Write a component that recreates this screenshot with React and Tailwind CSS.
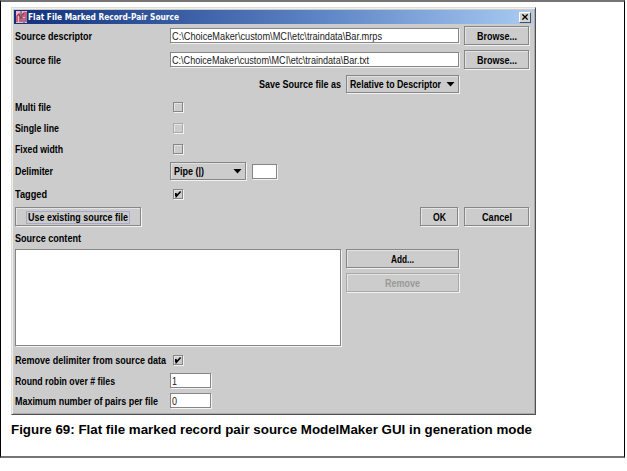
import { useLayoutEffect, useRef, useState } from 'react'

// Squeezes or stretches one line of text to a given width.
function Fit({ w, className = '', children }) {
  const ref = useRef(null)
  const [scale, setScale] = useState(1)
  useLayoutEffect(() => {
    if (ref.current.offsetWidth) setScale(w / ref.current.getBoundingClientRect().width)
  }, [])
  return (
    <span className={`inline-flex shrink-0 whitespace-pre ${className}`} style={{ width: w }}>
      <span ref={ref} className="inline-block shrink-0 origin-left" style={{ transform: `scaleX(${scale})` }}>
        {children}
      </span>
    </span>
  )
}

function Row({ h, label, w, low, children }) {
  return (
    <div className={`flex shrink-0 items-center ${h}`}>
      <div className={`flex w-[155px] shrink-0 ${low ? 'pt-[2px]' : ''}`}>
        <Fit w={w}>{label}</Fit>
      </div>
      {children}
    </div>
  )
}

function Button({ className, w, disabled, focus, children }) {
  return (
    <div
      className={`flex h-[19px] shrink-0 items-center justify-center border pt-px shadow-[1px_1px_0_#f2f2f2,inset_1px_1px_0_#e4e4e4] ${disabled ? 'border-[#a8a8a8] text-[#999]' : 'border-[#868686]'} ${className}`}
    >
      <div className={focus ? 'flex h-[13px] items-center border border-[#a9a9c6] px-px' : 'flex'}>
        <Fit w={w}>{children}</Fit>
      </div>
    </div>
  )
}

function Field({ className, w, children }) {
  return (
    <div
      className={`flex h-[15px] shrink-0 items-center border border-[#868686] bg-white pl-px pt-px text-[11.5px] font-normal text-[#222] shadow-[1px_1px_0_#f2f2f2] ${className}`}
    >
      {children && <Fit w={w}>{children}</Fit>}
    </div>
  )
}

function Combo({ className, w, children }) {
  return (
    <div
      className={`flex h-[18px] shrink-0 items-center justify-between border border-[#868686] pl-[3px] pr-[3px] shadow-[1px_1px_0_#f2f2f2,inset_1px_1px_0_#e0e0e0] ${className}`}
    >
      <Fit w={w}>{children}</Fit>
      <svg width="9" height="5" viewBox="0 0 9 5">
        <path d="M0.5 0H8.5L4.5 4.5Z" fill="#000" />
      </svg>
    </div>
  )
}

function Check({ checked, disabled }) {
  return (
    <div
      className={`ml-[3px] flex size-[10px] shrink-0 items-center justify-center border shadow-[1px_1px_0_#f2f2f2,inset_1px_1px_0_#e4e4e4] ${disabled ? 'border-[#aaa]' : 'border-[#868686]'}`}
    >
      {checked && (
        <svg width="8" height="8" viewBox="0 0 8 8">
          <path d="M1.7 3V6.3M2.4 3.4V6.3L6.6 1.6" fill="none" stroke="#000" strokeWidth="1.5" />
        </svg>
      )}
    </div>
  )
}

export default function App() {
  return (
    <div className="h-[471px] w-[627px] overflow-hidden bg-white font-['Liberation_Sans',Arial,sans-serif] text-black">
      <div className="h-[458px] w-[625px] border-x border-y-2 border-x-black border-y-[#747474] pl-[10px] pt-[5px]">
        <div className="flex h-[408px] w-[525px] flex-col border border-b-[#505050] border-l-[#deddd6] border-r-[#505050] border-t-[#deddd6] bg-[#ccc] shadow-[inset_1px_1px_0_#f0f0ea,inset_-1px_-1px_0_#aaa]">
          <div className="mx-[2px] mt-[2px] flex h-[14px] shrink-0 items-center bg-linear-to-r from-[#12307c] via-[#5f86c6] via-60% to-[#a9cbf2] pl-[2px] pr-[2px]">
            <svg width="11" height="12" viewBox="0 0 11 12" className="mr-px shrink-0">
              <rect width="11" height="12" fill="#e9b9c6" />
              <path d="M1 11V5L3 3L4 6V11M6 11V4L8 2V6M10 1V11" fill="none" stroke="#b03050" strokeWidth="1.3" />
              <path d="M5 0V8M8 7V12" stroke="#35406f" strokeWidth="1" />
            </svg>
            <Fit w={151} className="font-['DejaVu_Sans',sans-serif] text-[9px] leading-[13px] font-bold text-white">
              Flat File Marked Record-Pair Source
            </Fit>
            <div className="ml-auto flex h-[11px] w-[12px] items-center justify-center border border-b-[#505050] border-l-white border-r-[#505050] border-t-white bg-[#d6d3ce]">
              <svg width="6" height="6" viewBox="0 0 7 7">
                <path d="M0.5 0.5L6.5 6.5M6.5 0.5L0.5 6.5" stroke="#000" strokeWidth="1.5" />
              </svg>
            </div>
          </div>

          <div className="flex flex-col pl-[3px] text-[11px] leading-[13px] font-bold">
            <Row h="h-[23px]" label="Source descriptor" w={77} low>
              <Field className="w-[289px]" w={210}>{'C:\\ChoiceMaker\\custom\\MCI\\etc\\traindata\\Bar.mrps'}</Field>
              <Button className="ml-[5px] w-[65px]" w={40}>Browse...</Button>
            </Row>
            <Row h="h-[25px]" label="Source file" w={46} low>
              <Field className="w-[289px]" w={197}>{'C:\\ChoiceMaker\\custom\\MCI\\etc\\traindata\\Bar.txt'}</Field>
              <Button className="ml-[5px] w-[65px]" w={40}>Browse...</Button>
            </Row>
            <div className="flex h-[24px] items-center pl-[244px]">
              <Fit w={82}>Save Source file as</Fit>
              <Combo className="ml-[5px] w-[113px]" w={91}>Relative to Descriptor</Combo>
            </div>
            <Row h="h-[22px]" label="Multi file" w={36}><Check /></Row>
            <Row h="h-[20px]" label="Single line" w={44}><Check disabled /></Row>
            <Row h="h-[22px]" label="Fixed width" w={48}><Check /></Row>
            <Row h="h-[22px]" label="Delimiter" w={38}>
              <Combo className="w-[76px]" w={30}>Pipe (|)</Combo>
              <Field className="ml-[6px] w-[25px]" />
            </Row>
            <Row h="h-[24px]" label="Tagged" w={32}><Check checked /></Row>
            <div className="flex h-[21px] items-center">
              <Button className="w-[126px]" w={100} focus>Use existing source file</Button>
              <Button className="ml-[279px] w-[38px]" w={13}>OK</Button>
              <Button className="ml-[6px] w-[65px]" w={30}>Cancel</Button>
            </div>
            <Row h="h-[22px]" label="Source content" w={66} />
            <div className="flex h-[97px] items-start">
              <div className="h-[97px] w-[326px] border border-[#868686] bg-white shadow-[1px_1px_0_#f2f2f2]" />
              <div className="ml-[5px] flex flex-col gap-[5px]">
                <Button className="w-[113px]" w={23}>Add...</Button>
                <Button className="w-[113px]" w={35} disabled>Remove</Button>
              </div>
            </div>
            <Row h="h-[27px]" label="Remove delimiter from source data" w={151} low><Check checked /></Row>
            <Row h="h-[15px]" label="Round robin over # files" w={100} low>
              <Field className="w-[41px]" w={5}>1</Field>
            </Row>
            <div className="h-[5px]" />
            <Row h="h-[15px]" label="Maximum number of pairs per file" w={143} low>
              <Field className="w-[41px]" w={5}>0</Field>
            </Row>
          </div>
        </div>
        <div className="flex pt-[6px] text-[13.5px] leading-[18px] font-bold">
          <Fit w={521}>Figure 69: Flat file marked record pair source ModelMaker GUI in generation mode</Fit>
        </div>
      </div>
    </div>
  )
}
